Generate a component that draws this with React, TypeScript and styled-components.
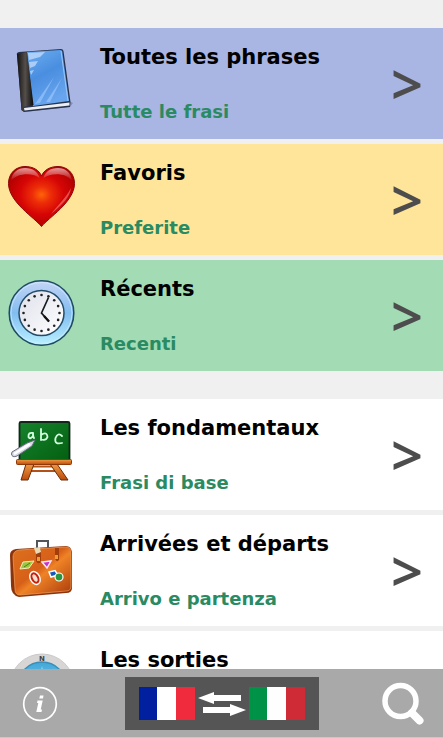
import React from "react";
import styled, { createGlobalStyle } from "styled-components";

const GlobalStyle = createGlobalStyle`
  * { box-sizing: border-box; }
  body {
    margin: 0;
    background: #f0f0f0;
    font-family: Verdana, "DejaVu Sans", sans-serif;
  }
`;

const Screen = styled.div`
  display: flex;
  flex-direction: column;
  height: 100vh;
  overflow: hidden;
`;

const Content = styled.main`
  flex: 1;
  min-height: 0;
  overflow-y: auto;
  scrollbar-width: none;
  display: flex;
  flex-direction: column;
  gap: 28px;
  padding: 28px 0;
`;

const Group = styled.nav`
  display: flex;
  flex-direction: column;
  gap: 5px;
`;

const Row = styled.a<{ $color: string }>`
  display: grid;
  grid-template-columns: 84px 1fr 36px;
  column-gap: 16px;
  align-items: start;
  padding: 15px 16px 13px 0;
  background: ${(p) => p.$color};
  color: #000;
  text-decoration: none;
`;

const IconCell = styled.span`
  display: flex;
  justify-content: center;
  height: 72px;
`;

const Labels = styled.span`
  display: flex;
  flex-direction: column;
  gap: 27px;
  min-height: 83px;
  font-weight: bold;
  white-space: nowrap;
`;

const Title = styled.span`
  font-size: 21px;
  line-height: 28px;
`;

const Translation = styled.span`
  font-size: 18px;
  line-height: 28px;
  color: #2a8a62;
`;

const Chevron = styled.span`
  font-family: "Noto Sans", sans-serif;
  font-size: 56px;
  font-weight: 600;
  line-height: 80px;
  color: #4d4d4d;
`;

const Footer = styled.footer`
  flex: none;
  display: flex;
  align-items: center;
  justify-content: space-between;
  padding: 8px 16px 7px;
  background: #a9a9a9;
  border-bottom: 1px solid #c8c8c8;
`;

const IconButton = styled.button`
  display: flex;
  align-items: center;
  justify-content: center;
  width: 48px;
  height: 48px;
  padding: 0;
  border: 0;
  background: none;
`;

const SwapButton = styled.button`
  display: flex;
  align-items: center;
  justify-content: center;
  gap: 3px;
  width: 194px;
  height: 53px;
  padding: 0;
  border: 0;
  background: #555;
`;

const FlagBox = styled.span`
  display: flex;
  width: 56px;
  height: 33px;
`;

const Stripe = styled.span<{ $color: string }>`
  flex: 1;
  background: ${(p) => p.$color};
`;

const Flag = ({ colors }: { colors: string[] }) => (
  <FlagBox>
    {colors.map((c) => (
      <Stripe key={c} $color={c} />
    ))}
  </FlagBox>
);

const BookIcon = () => (
  <svg width="84" height="72" viewBox="0 1 84 72" aria-hidden="true">
    <defs>
      <linearGradient id="cover" x1="0" y1="0" x2=".4" y2="1">
        <stop offset="0" stopColor="#6caef0" />
        <stop offset=".5" stopColor="#4a8ee0" />
        <stop offset="1" stopColor="#68a5ee" />
      </linearGradient>
      <linearGradient id="spine">
        <stop offset="0" stopColor="#111" />
        <stop offset=".5" stopColor="#554f4a" />
        <stop offset="1" stopColor="#0a0a0a" />
      </linearGradient>
    </defs>
    <path d="M24 70 70 65 73 61 66 58Z" fill="#404868" opacity=".35" />
    <path d="M17 13Q16 11 19 10L61 7Q63 7 63.500 9L70.500 60 70 65 24 70 21.500 68Z" fill="#27324c" />
    <path d="M24 66 69.500 60.500V63.500L24.500 68.500Z" fill="#eceff2" />
    <path d="M27 10 60.500 8Q62 8 62.300 9.500L69 59 33 64Z" fill="url(#cover)" />
    <path d="M17 12 27 10 33.500 63 23.500 65 24 70 21.500 68Z" fill="url(#spine)" />
    <path d="M28 11 45 10 40 15 29 18ZM29 20 38 19 35 24 30 26ZM30 29 34 28 31 33Z" fill="#d5e7ff" opacity=".65" />
    <path d="M35 62 54 35 40 61ZM46 60 62 36 50 60Z" fill="#a9cfff" opacity=".55" />
    <path d="M61 9 68 59" stroke="#9cc8f7" strokeWidth="1" />
  </svg>
);

const HeartIcon = () => (
  <svg width="84" height="72" viewBox="0 1 84 72" aria-hidden="true">
    <defs>
      <radialGradient id="heart" cx=".5" cy=".47" r=".55">
        <stop offset="0" stopColor="#ff6408" />
        <stop offset=".25" stopColor="#ed2e08" />
        <stop offset=".6" stopColor="#d60505" />
        <stop offset="1" stopColor="#b00000" />
      </radialGradient>
      <linearGradient id="shine" x1="0" y1="0" x2="0" y2="1">
        <stop offset="0" stopColor="#fff" stopOpacity=".6" />
        <stop offset="1" stopColor="#fff" stopOpacity="0" />
      </linearGradient>
    </defs>
    <path d="M41.500 68.500C35 60 8.500 44 8.500 25.500C8.500 15 16 8.500 25 8.500C33 8.500 39 12 41.500 18C44 12 50 8.500 58 8.500C67 8.500 74.500 15 74.500 25.500C74.500 44 48 60 41.500 68.500Z" fill="url(#heart)" stroke="#8c0808" strokeWidth="1" />
    <path d="M11 23C12 14 18 10 25 10C33 10 38 14 39.500 20C34 15 18 14 11 23ZM43.500 20C45 14 50 10 58 10C65 10 71 14 72 23C66 14 50 15 43.500 20Z" fill="url(#shine)" />
    <path d="M51 56C63 46 70 39 71 30C65 41 58 47 51 56Z" fill="#ff9a9a" opacity=".5" />
  </svg>
);

const clockDots = Array.from({ length: 16 }, (_, i) => {
  const angle = (i * Math.PI) / 8;
  return { x: 41.5 + 18 * Math.sin(angle), y: 39 - 18 * Math.cos(angle) };
});

const ClockIcon = () => (
  <svg width="84" height="72" viewBox="0 1 84 72" aria-hidden="true">
    <defs>
      <linearGradient id="rim" x1="0" y1="0" x2="0" y2="1">
        <stop offset="0" stopColor="#c5d4f6" />
        <stop offset=".5" stopColor="#82bdf0" />
        <stop offset="1" stopColor="#b9f1ff" />
      </linearGradient>
      <linearGradient id="face" x1="0" y1="0" x2="1" y2="1">
        <stop offset="0" stopColor="#dfe1eb" />
        <stop offset="1" stopColor="#fff" />
      </linearGradient>
    </defs>
    <circle cx="41.500" cy="39" r="32.300" fill="url(#rim)" stroke="#1c4b62" strokeWidth="1.500" />
    <circle cx="41.500" cy="39" r="30.500" fill="none" stroke="#d6edff" strokeWidth="1" opacity=".7" />
    <circle cx="41.500" cy="39" r="22.500" fill="url(#face)" stroke="#234c68" strokeWidth="1.500" />
    {clockDots.map((d) => (
      <circle key={`${d.x} ${d.y}`} cx={d.x} cy={d.y} r="1.300" fill="#222" />
    ))}
    <path d="M48.500 23.500 41.500 39 49 47.500" fill="none" stroke="#161b20" strokeWidth="1.700" />
    <path d="M44 42 49 47.500" stroke="#111" strokeWidth="2.200" />
  </svg>
);

const BoardIcon = () => (
  <svg width="84" height="72" viewBox="0 1 84 72" aria-hidden="true">
    <defs>
      <linearGradient id="board" x1="0" y1="0" x2="1" y2="1">
        <stop offset="0" stopColor="#16822c" />
        <stop offset="1" stopColor="#036011" />
      </linearGradient>
      <linearGradient id="wood" x1="0" y1="0" x2="0" y2="1">
        <stop offset="0" stopColor="#ef9a43" />
        <stop offset="1" stopColor="#bd4c0b" />
      </linearGradient>
    </defs>
    <path d="M33 53.500H56M30 58H58" stroke="#b35216" strokeWidth="2" />
    <path d="M26 51H34L28 67H21ZM50 51H57L68 67H61Z" fill="url(#wood)" stroke="#692b08" strokeWidth="1" />
    <rect x="19.500" y="9" width="50" height="39" rx="1.500" fill="url(#board)" stroke="#12261a" strokeWidth="1.800" />
    <rect x="16.500" y="46.500" width="55" height="5" rx="1" fill="url(#wood)" stroke="#8f3909" />
    <g fill="none" stroke="#d4ffe1" strokeWidth="1.800" strokeLinecap="round">
      <path d="M33 20Q28 19 28.500 24Q30 27 33 23V20Q33 24 34 25" />
      <path d="M41 16V27M41 22Q47 18 47.500 24Q46 28 41 26.500" />
      <path d="M62 23Q58 19 55.500 25Q54 32 62 30" />
    </g>
    <path d="M12 39 27 30 35 27 32 33 17 43Q12 45 11.500 41Z" fill="#dadae8" stroke="#666b7d" strokeWidth="1" />
    <path d="M14 41 30 31" stroke="#fff" strokeWidth="2.500" />
  </svg>
);

const SuitcaseIcon = () => (
  <svg width="84" height="72" viewBox="0 1 84 72" aria-hidden="true">
    <defs>
      <linearGradient id="leather" x1="0" y1="0" x2="1" y2="1">
        <stop offset="0" stopColor="#dc701f" />
        <stop offset=".45" stopColor="#d76018" />
        <stop offset=".55" stopColor="#ef8326" />
        <stop offset="1" stopColor="#a83a0b" />
      </linearGradient>
    </defs>
    <path d="M37 20V12H48V19" fill="none" stroke="#50565c" strokeWidth="2" />
    <path d="M16 20 66 17Q71 17 72 23V59Q72 64 66 64L19 68Q11 66 11 57L10 26Q10 21 16 20Z" fill="#8d330b" />
    <path d="M19 21 66 18Q71 18 71 24V57Q71 62 66 62L20 66Q15 66 15 60L13 28Q13 22 19 21Z" fill="url(#leather)" stroke="#f1a05c" strokeWidth=".7" />
    <path d="M36 20H41V33Q38 36 36 32ZM55 19H59V31Q56 34 55 29Z" fill="#a13e0c" />
    <path d="M37 28H40V32H37ZM55 26H58V30H55Z" fill="#ef9e32" />
    <path d="M34 19 40 18 41 23 36 25Z" fill="#eadab3" />
    <path d="M23 33 34 32 29 39 20 40Z" fill="#99c83c" stroke="#f6edbd" strokeWidth="1" />
    <path d="M24 38 30 34" stroke="#557b23" strokeWidth="1" />
    <path d="M42 33 51 32 47 39Z" fill="#c530d0" stroke="#ffe9f5" strokeWidth="1.500" />
    <g transform="rotate(-28 35 49)">
      <ellipse cx="35" cy="49" rx="5.500" ry="7.500" fill="#fff" />
      <ellipse cx="35" cy="49" rx="3" ry="5" fill="#eee1d0" stroke="#c52310" strokeWidth="2" />
    </g>
    <path d="M49 43 55 41.500 58 46 51 48Z" fill="#1855bc" stroke="#fff" strokeWidth="1.500" />
    <circle cx="59" cy="48" r="4" fill="#27963e" stroke="#fff" strokeWidth="1.200" />
  </svg>
);

const CompassIcon = () => (
  <svg width="84" height="72" viewBox="0 1 84 72" aria-hidden="true">
    <defs>
      <linearGradient id="dial" x1="0" y1="0" x2="0" y2="1">
        <stop offset="0" stopColor="#41a7d8" />
        <stop offset="1" stopColor="#a8e5f8" />
      </linearGradient>
    </defs>
    <circle cx="42" cy="41" r="32" fill="#d8d5d5" stroke="#cbc9c9" />
    <circle cx="42" cy="41" r="24" fill="url(#dial)" stroke="#398fba" strokeWidth="1.500" />
    <path d="M42 21 47 41 42 61 37 41Z" fill="#8fd3f2" />
    <text x="42" y="16" textAnchor="middle" fontSize="7" fontWeight="bold" fontFamily="DejaVu Sans, sans-serif" fill="#444">N</text>
  </svg>
);

const InfoIcon = () => (
  <svg width="48" height="48" viewBox="0 0 48 48" aria-hidden="true">
    <circle cx="24" cy="24" r="16.300" fill="none" stroke="#fff" strokeWidth="1.700" />
    <path d="M24 15.500H27.500L27 18.500H23.300ZM21.500 20.500H26.700L24.700 29.500H26L25.500 32H20.300L22.300 23H21Z" fill="#fff" />
  </svg>
);

const SwapIcon = () => (
  <svg width="48" height="24" viewBox="0 0 48 24" aria-hidden="true">
    <path d="M0 6 16 0V3H43V9H16V12ZM48 18 32 12V15H5V21H32V24Z" fill="#fff" />
  </svg>
);

const SearchIcon = () => (
  <svg width="48" height="48" viewBox="0 0 48 48" aria-hidden="true">
    <circle cx="21.500" cy="21" r="15.500" fill="none" stroke="#fff" strokeWidth="5.500" />
    <path d="M33 33 40.500 40.500" stroke="#fff" strokeWidth="8" strokeLinecap="round" />
  </svg>
);

type Item = {
  title: string;
  translation?: string;
  color: string;
  Icon: () => React.JSX.Element;
};

const shortcuts: Item[] = [
  { title: "Toutes les phrases", translation: "Tutte le frasi", color: "#a9b5e2", Icon: BookIcon },
  { title: "Favoris", translation: "Preferite", color: "#ffe599", Icon: HeartIcon },
  { title: "Récents", translation: "Recenti", color: "#a3dbb5", Icon: ClockIcon },
];

const themes: Item[] = [
  { title: "Les fondamentaux", translation: "Frasi di base", color: "#fff", Icon: BoardIcon },
  { title: "Arrivées et départs", translation: "Arrivo e partenza", color: "#fff", Icon: SuitcaseIcon },
  { title: "Les sorties", color: "#fff", Icon: CompassIcon },
];

const List = ({ items, label }: { items: Item[]; label: string }) => (
  <Group aria-label={label}>
    {items.map(({ title, translation, color, Icon }) => (
      <Row key={title} href="#" $color={color}>
        <IconCell>
          <Icon />
        </IconCell>
        <Labels>
          <Title lang="fr">{title}</Title>
          {translation && <Translation lang="it">{translation}</Translation>}
        </Labels>
        <Chevron aria-hidden="true">&gt;</Chevron>
      </Row>
    ))}
  </Group>
);

export default function App() {
  return (
    <Screen>
      <GlobalStyle />
      <Content>
        <List items={shortcuts} label="Raccourcis" />
        <List items={themes} label="Thèmes" />
      </Content>
      <Footer>
        <IconButton aria-label="Informations">
          <InfoIcon />
        </IconButton>
        <SwapButton aria-label="Inverser les langues">
          <Flag colors={["#00209f", "#ffffff", "#ef2b3d"]} />
          <SwapIcon />
          <Flag colors={["#009246", "#fefefe", "#ce2b37"]} />
        </SwapButton>
        <IconButton aria-label="Rechercher">
          <SearchIcon />
        </IconButton>
      </Footer>
    </Screen>
  );
}
